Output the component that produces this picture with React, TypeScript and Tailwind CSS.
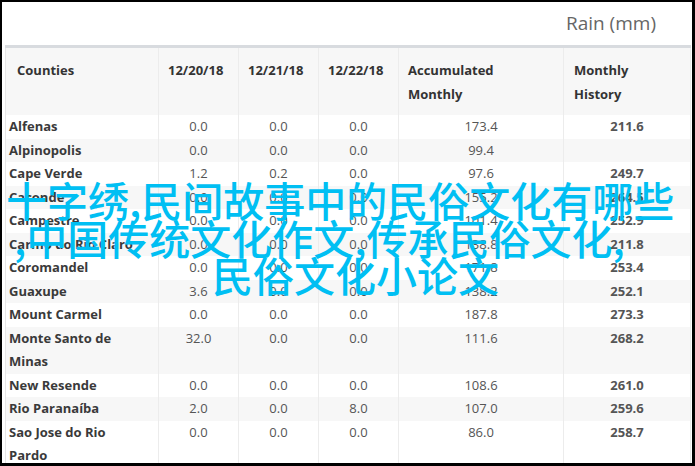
import React from 'react';

type Row = {
  name: string;
  d1: string;
  d2: string;
  d3: string;
  acc: string;
  hist: string;
};

const rows: Row[] = [
  { name: 'Alfenas', d1: '0.0', d2: '0.0', d3: '0.0', acc: '173.4', hist: '211.6' },
  { name: 'Alpinopolis', d1: '0.0', d2: '0.0', d3: '0.0', acc: '99.4', hist: '' },
  { name: 'Cape Verde', d1: '1.2', d2: '0.2', d3: '0.0', acc: '97.6', hist: '249.7' },
  { name: 'Caconde', d1: '0.0', d2: '0.0', d3: '0.0', acc: '155.2', hist: '264.5' },
  { name: 'Campestre', d1: '0.0', d2: '0.0', d3: '0.0', acc: '101.4', hist: '252.9' },
  { name: 'Carmo do Rio Claro', d1: '0.0', d2: '0.0', d3: '0.0', acc: '138.8', hist: '211.8' },
  { name: 'Coromandel', d1: '0.0', d2: '0.0', d3: '0.0', acc: '171.8', hist: '253.4' },
  { name: 'Guaxupe', d1: '3.6', d2: '0.0', d3: '0.0', acc: '138.2', hist: '252.1' },
  { name: 'Mount Carmel', d1: '0.0', d2: '0.0', d3: '0.0', acc: '187.8', hist: '273.3' },
  { name: 'Monte Santo de Minas', d1: '32.0', d2: '0.0', d3: '0.0', acc: '111.6', hist: '268.2' },
  { name: 'New Resende', d1: '0.0', d2: '0.0', d3: '0.0', acc: '108.6', hist: '261.0' },
  { name: 'Rio Paranaíba', d1: '2.0', d2: '0.0', d3: '8.0', acc: '107.0', hist: '259.6' },
  { name: 'Sao Jose do Rio Pardo', d1: '0.0', d2: '0.0', d3: '0.0', acc: '86.0', hist: '258.7' },
];

const th = 'align-top text-left font-bold text-[#333] border-l border-[#ececec] pt-[11px] pb-[9px]';
const td = 'align-top text-center text-[#555] border-l border-[#ececec]';

export default function App() {
  return (
    <div
      className="relative w-[695px] h-[466px] overflow-hidden bg-white border-l-2 border-t-2 border-r-[3px] border-b-[3px] border-black"
      style={{ fontFamily: '"Open Sans", "Liberation Sans", sans-serif' }}
    >
      <div className="h-[43px] flex items-center justify-end pr-[36px] text-[19px] text-[#666]">Rain (mm)</div>

      <div className="pl-[3px]">
        <table className="table-fixed border-collapse w-[685px] text-[13px] leading-[23.5px]">
          <colgroup>
            <col className="w-[153px]" />
            <col className="w-[80px]" />
            <col className="w-[80px]" />
            <col className="w-[80px]" />
            <col className="w-[165px]" />
            <col className="w-[127px]" />
          </colgroup>
          <thead className="bg-[#f7f7f7] border-t-[3px] border-[#d8dbdf]">
            <tr>
              <th className={`${th} pl-[11px] border-l-[#e6e6e6]`}>Counties</th>
              <th className={`${th} pl-[9px]`}>12/20/18</th>
              <th className={`${th} pl-[9px]`}>12/21/18</th>
              <th className={`${th} pl-[9px]`}>12/22/18</th>
              <th className={`${th} pl-[9px]`}>
                Accumulated
                <br />
                Monthly
              </th>
              <th className={`${th} pl-[10px] border-r`}>
                Monthly
                <br />
                History
              </th>
            </tr>
          </thead>
          <tbody>
            {rows.map((r, i) => (
              <tr key={r.name} className={i % 2 === 1 ? 'bg-[#f7f7f7]' : 'bg-white'}>
                <td className="align-top text-left font-bold text-[#3a3a3a] pl-[3px] pr-[20px] border-l border-[#e6e6e6]">
                  {r.name}
                </td>
                <td className={td}>{r.d1}</td>
                <td className={td}>{r.d2}</td>
                <td className={td}>{r.d3}</td>
                <td className={td}>{r.acc}</td>
                <td className={`${td} font-bold text-[#333] border-r`}>{r.hist}</td>
              </tr>
            ))}
          </tbody>
        </table>
      </div>

      {/* overlay caption */}
      <div
        className="absolute left-0 top-[179px] flex flex-col items-start text-[41px] leading-[37.5px] font-medium text-[#00bff3] whitespace-nowrap"
        style={{ fontFamily: '"Noto Sans CJK SC", "Noto Sans", sans-serif' }}
      >
        <span className="ml-[4px]">十字绣,民间故事中的民俗文化有哪些</span>
        <span className="ml-[12px]">,中国传统文化作文,传承民俗文化,</span>
        <span className="ml-[210px]">民俗文化小论文</span>
      </div>
    </div>
  );
}
